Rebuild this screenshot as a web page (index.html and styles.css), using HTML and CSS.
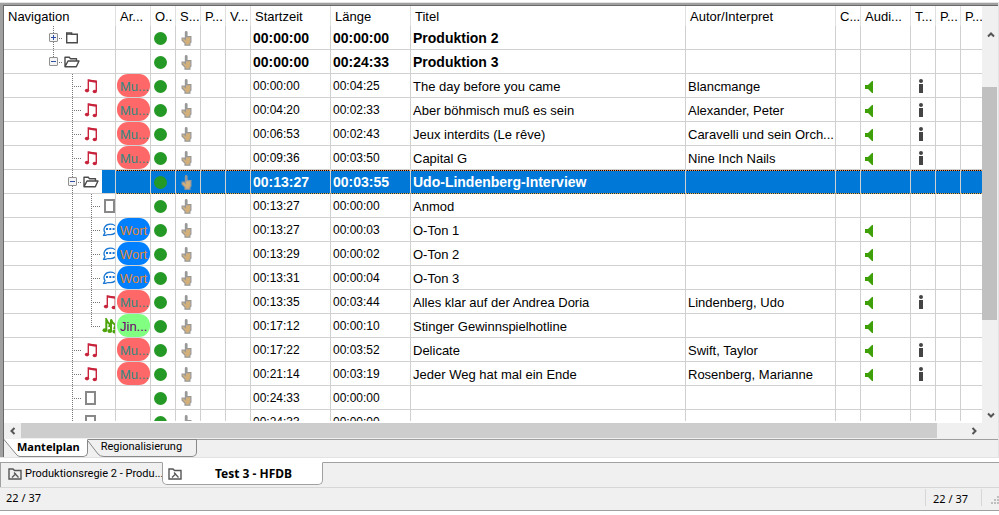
FILE: index.html
```
<!DOCTYPE html>
<html lang="de">
<head>
    <meta charset="UTF-8">
    <meta name="viewport" content="width=device-width, initial-scale=1.0">
    <title>Test 3 - HFDB</title>
    <link rel="stylesheet" href="styles.css">
</head>
<body>

<svg class="sprite" aria-hidden="true">
    <symbol id="folder" viewBox="0 0 16 16">
        <path d="M2.7 4.2V12.8H13.3V4.2H7.6V2.9H2.7V4.2" fill="none" stroke="#4a4a4a" stroke-width="1.4"/>
        <path d="M2.5 4H7.5" stroke="#4a4a4a" stroke-width="1.6"/>
    </symbol>
    <symbol id="folder-open" viewBox="0 0 16 16">
        <path d="M1 12.5V3.2H5.3L6.3 4.7H12.5V6.8M1 12.7L4 7H15L12.3 12.7Z" fill="none" stroke="#4a4a4a" stroke-width="1.4" stroke-linejoin="round"/>
    </symbol>
    <symbol id="music" viewBox="0 0 16 16">
        <path d="M5.3 12V2L13.3 3.3V13" fill="none" stroke="#c8243c" stroke-width="1.4"/>
        <path d="M5 1.4L14 2.8V5L5 3.6Z" fill="#c8243c"/>
        <ellipse cx="4" cy="12.6" rx="2.2" ry="1.8" fill="#c8243c"/>
        <ellipse cx="11.8" cy="13.5" rx="2.2" ry="1.8" fill="#c8243c"/>
    </symbol>
    <symbol id="jingle" viewBox="0 0 16 16">
        <path d="M4.3 12V1.5L6 4.5L8 6.5L7 9M9 13V1.5L10.5 4.5L13.5 7L12 11" fill="none" stroke="#4ca30c" stroke-width="2"/>
        <ellipse cx="2.9" cy="12.3" rx="2.4" ry="2" fill="#4ca30c"/>
        <ellipse cx="7.8" cy="13" rx="2.4" ry="2" fill="#4ca30c"/>
        <ellipse cx="12.4" cy="13.5" rx="2" ry="2" fill="#4ca30c"/>
    </symbol>
    <symbol id="speech" viewBox="0 0 16 16">
        <path d="M1.6 13.4L3 10.6C0.6 7 3 2.2 8.2 2.2C12 2.2 14.8 4.4 14.8 7.4C14.8 10.4 12 12.6 8.4 12.6C6.8 12.6 5.6 12.3 4.8 12.8C3.8 13.3 2.6 13.6 1.6 13.4Z" fill="#fff" stroke="#1976d2" stroke-width="1.3"/>
        <path d="M4 7H6M7.3 7H9.3M10.6 7H12.6" stroke="#1976d2" stroke-width="2"/>
    </symbol>
    <symbol id="blank" viewBox="0 0 16 16">
        <rect x="3" y="2" width="9" height="12" fill="#fff" stroke="#888" stroke-width="2"/>
    </symbol>
    <symbol id="hand" viewBox="0 0 12 16">
        <path d="M4.4 1.4C4.4 0.4 6 0.4 6 1.4V5.6H9.9V11.2L8.9 12.2V14.2H4V12.2L1.1 9.2V7.2H3.2L4.4 8.2Z" fill="#d2b07c" stroke="#999" stroke-width="1.2"/>
        <path d="M5.2 1V6.5" stroke="#999" stroke-width="1.6"/>
    </symbol>
    <symbol id="speaker" viewBox="0 0 9 12">
        <path d="M0 4H3L7 0H8V12H7L3 8H0Z" fill="#3f9f06"/>
    </symbol>
    <symbol id="info" viewBox="0 0 6 16">
        <circle cx="3" cy="2" r="2" fill="#444"/>
        <rect x="1" y="5" width="4" height="9" fill="#444"/>
    </symbol>
    <symbol id="project" viewBox="0 0 14 12">
        <path d="M1 11V1H5L6.5 2.5H13V11Z" fill="none" stroke="#555" stroke-width="1.4"/>
        <path d="M4 9.5L8 5.5M6 4.5L10.5 9.5" stroke="#555" stroke-width="1.2"/>
    </symbol>
</svg>

<main class="plan">
    <div class="grid">
        <div class="grid-view">
            <table class="playlist">
                <colgroup>
                    <col class="w-nav"><col class="w-type"><col class="w-icon"><col class="w-icon"><col class="w-icon"><col class="w-icon">
                    <col class="w-time"><col class="w-time"><col><col class="w-author"><col class="w-icon"><col class="w-audio"><col class="w-icon"><col class="w-icon"><col class="w-last">
                </colgroup>
                <thead>
                    <tr><th>Navigation</th><th>Ar...</th><th>O..</th><th>S...</th><th>P...</th><th>V...</th><th>Startzeit</th><th>Länge</th><th>Titel</th><th>Autor/Interpret</th><th>C...</th><th>Audi...</th><th>T...</th><th>P...</th><th>P...</th></tr>
                </thead>
                <tbody>
                    <tr class="group">
                        <td><div class="tree"><i class="guide line"><b class="box plus"></b></i><svg><use href="#folder"/></svg></div></td>
                        <td></td><td><i class="dot"></i></td><td><svg class="hand"><use href="#hand"/></svg></td><td></td><td></td>
                        <td>00:00:00</td><td>00:00:00</td><td>Produktion 2</td><td></td><td></td><td></td><td></td><td></td><td></td>
                    </tr>
                    <tr class="group">
                        <td><div class="tree"><i class="guide line end"><b class="box"></b></i><svg><use href="#folder-open"/></svg></div></td>
                        <td></td><td><i class="dot"></i></td><td><svg class="hand"><use href="#hand"/></svg></td><td></td><td></td>
                        <td>00:00:00</td><td>00:24:33</td><td>Produktion 3</td><td></td><td></td><td></td><td></td><td></td><td></td>
                    </tr>
                    <tr>
                        <td><div class="tree"><i class="guide"></i><i class="guide line"></i><svg><use href="#music"/></svg></div></td>
                        <td><span class="pill music">Mu...</span></td><td><i class="dot"></i></td><td><svg class="hand"><use href="#hand"/></svg></td><td></td><td></td>
                        <td>00:00:00</td><td>00:04:25</td><td>The day before you came</td><td>Blancmange</td><td></td><td><svg class="speaker"><use href="#speaker"/></svg></td><td><svg class="info"><use href="#info"/></svg></td><td></td><td></td>
                    </tr>
                    <tr>
                        <td><div class="tree"><i class="guide"></i><i class="guide line"></i><svg><use href="#music"/></svg></div></td>
                        <td><span class="pill music">Mu...</span></td><td><i class="dot"></i></td><td><svg class="hand"><use href="#hand"/></svg></td><td></td><td></td>
                        <td>00:04:20</td><td>00:02:33</td><td>Aber böhmisch muß es sein</td><td>Alexander, Peter</td><td></td><td><svg class="speaker"><use href="#speaker"/></svg></td><td><svg class="info"><use href="#info"/></svg></td><td></td><td></td>
                    </tr>
                    <tr>
                        <td><div class="tree"><i class="guide"></i><i class="guide line"></i><svg><use href="#music"/></svg></div></td>
                        <td><span class="pill music">Mu...</span></td><td><i class="dot"></i></td><td><svg class="hand"><use href="#hand"/></svg></td><td></td><td></td>
                        <td>00:06:53</td><td>00:02:43</td><td>Jeux interdits (Le rêve)</td><td>Caravelli und sein Orch...</td><td></td><td><svg class="speaker"><use href="#speaker"/></svg></td><td><svg class="info"><use href="#info"/></svg></td><td></td><td></td>
                    </tr>
                    <tr>
                        <td><div class="tree"><i class="guide"></i><i class="guide line"></i><svg><use href="#music"/></svg></div></td>
                        <td><span class="pill music">Mu...</span></td><td><i class="dot"></i></td><td><svg class="hand"><use href="#hand"/></svg></td><td></td><td></td>
                        <td>00:09:36</td><td>00:03:50</td><td>Capital G</td><td>Nine Inch Nails</td><td></td><td><svg class="speaker"><use href="#speaker"/></svg></td><td><svg class="info"><use href="#info"/></svg></td><td></td><td></td>
                    </tr>
                    <tr class="group selected">
                        <td><div class="tree"><i class="guide"></i><i class="guide line"><b class="box"></b></i><svg><use href="#folder-open"/></svg></div></td>
                        <td></td><td><i class="dot"></i></td><td><svg class="hand"><use href="#hand"/></svg></td><td></td><td></td>
                        <td>00:13:27</td><td>00:03:55</td><td>Udo-Lindenberg-Interview</td><td></td><td></td><td></td><td></td><td></td><td></td>
                    </tr>
                    <tr>
                        <td><div class="tree"><i class="guide"></i><i class="guide pass"></i><i class="guide line"></i><svg><use href="#blank"/></svg></div></td>
                        <td></td><td><i class="dot"></i></td><td><svg class="hand"><use href="#hand"/></svg></td><td></td><td></td>
                        <td>00:13:27</td><td>00:00:00</td><td>Anmod</td><td></td><td></td><td></td><td></td><td></td><td></td>
                    </tr>
                    <tr>
                        <td><div class="tree"><i class="guide"></i><i class="guide pass"></i><i class="guide line"></i><svg><use href="#speech"/></svg></div></td>
                        <td><span class="pill word">Wort</span></td><td><i class="dot"></i></td><td><svg class="hand"><use href="#hand"/></svg></td><td></td><td></td>
                        <td>00:13:27</td><td>00:00:03</td><td>O-Ton 1</td><td></td><td></td><td><svg class="speaker"><use href="#speaker"/></svg></td><td></td><td></td><td></td>
                    </tr>
                    <tr>
                        <td><div class="tree"><i class="guide"></i><i class="guide pass"></i><i class="guide line"></i><svg><use href="#speech"/></svg></div></td>
                        <td><span class="pill word">Wort</span></td><td><i class="dot"></i></td><td><svg class="hand"><use href="#hand"/></svg></td><td></td><td></td>
                        <td>00:13:29</td><td>00:00:02</td><td>O-Ton 2</td><td></td><td></td><td><svg class="speaker"><use href="#speaker"/></svg></td><td></td><td></td><td></td>
                    </tr>
                    <tr>
                        <td><div class="tree"><i class="guide"></i><i class="guide pass"></i><i class="guide line"></i><svg><use href="#speech"/></svg></div></td>
                        <td><span class="pill word">Wort</span></td><td><i class="dot"></i></td><td><svg class="hand"><use href="#hand"/></svg></td><td></td><td></td>
                        <td>00:13:31</td><td>00:00:04</td><td>O-Ton 3</td><td></td><td></td><td><svg class="speaker"><use href="#speaker"/></svg></td><td></td><td></td><td></td>
                    </tr>
                    <tr>
                        <td><div class="tree"><i class="guide"></i><i class="guide pass"></i><i class="guide line"></i><svg><use href="#music"/></svg></div></td>
                        <td><span class="pill music">Mu...</span></td><td><i class="dot"></i></td><td><svg class="hand"><use href="#hand"/></svg></td><td></td><td></td>
                        <td>00:13:35</td><td>00:03:44</td><td>Alles klar auf der Andrea Doria</td><td>Lindenberg, Udo</td><td></td><td><svg class="speaker"><use href="#speaker"/></svg></td><td><svg class="info"><use href="#info"/></svg></td><td></td><td></td>
                    </tr>
                    <tr>
                        <td><div class="tree"><i class="guide"></i><i class="guide pass"></i><i class="guide line end"></i><svg><use href="#jingle"/></svg></div></td>
                        <td><span class="pill jingle">Jin...</span></td><td><i class="dot"></i></td><td><svg class="hand"><use href="#hand"/></svg></td><td></td><td></td>
                        <td>00:17:12</td><td>00:00:10</td><td>Stinger Gewinnspielhotline</td><td></td><td></td><td><svg class="speaker"><use href="#speaker"/></svg></td><td></td><td></td><td></td>
                    </tr>
                    <tr>
                        <td><div class="tree"><i class="guide"></i><i class="guide line"></i><svg><use href="#music"/></svg></div></td>
                        <td><span class="pill music">Mu...</span></td><td><i class="dot"></i></td><td><svg class="hand"><use href="#hand"/></svg></td><td></td><td></td>
                        <td>00:17:22</td><td>00:03:52</td><td>Delicate</td><td>Swift, Taylor</td><td></td><td><svg class="speaker"><use href="#speaker"/></svg></td><td><svg class="info"><use href="#info"/></svg></td><td></td><td></td>
                    </tr>
                    <tr>
                        <td><div class="tree"><i class="guide"></i><i class="guide line"></i><svg><use href="#music"/></svg></div></td>
                        <td><span class="pill music">Mu...</span></td><td><i class="dot"></i></td><td><svg class="hand"><use href="#hand"/></svg></td><td></td><td></td>
                        <td>00:21:14</td><td>00:03:19</td><td>Jeder Weg hat mal ein Ende</td><td>Rosenberg, Marianne</td><td></td><td><svg class="speaker"><use href="#speaker"/></svg></td><td><svg class="info"><use href="#info"/></svg></td><td></td><td></td>
                    </tr>
                    <tr>
                        <td><div class="tree"><i class="guide"></i><i class="guide line"></i><svg><use href="#blank"/></svg></div></td>
                        <td></td><td><i class="dot"></i></td><td><svg class="hand"><use href="#hand"/></svg></td><td></td><td></td>
                        <td>00:24:33</td><td>00:00:00</td><td></td><td></td><td></td><td></td><td></td><td></td><td></td>
                    </tr>
                    <tr>
                        <td><div class="tree"><i class="guide"></i><i class="guide line"></i><svg><use href="#blank"/></svg></div></td>
                        <td></td><td><i class="dot"></i></td><td><svg class="hand"><use href="#hand"/></svg></td><td></td><td></td>
                        <td>00:24:33</td><td>00:00:00</td><td></td><td></td><td></td><td></td><td></td><td></td><td></td>
                    </tr>
                </tbody>
            </table>
        </div>
        <div class="vscroll">
            <button type="button" aria-label="Nach oben"><svg viewBox="0 0 8 6"><path d="M1 4.5L4 1.5L7 4.5"/></svg></button>
            <div class="track"><div class="thumb"></div></div>
            <button type="button" aria-label="Nach unten"><svg viewBox="0 0 8 6"><path d="M1 1.5L4 4.5L7 1.5"/></svg></button>
        </div>
    </div>
    <div class="hscroll">
        <button type="button" aria-label="Nach links"><svg viewBox="0 0 6 8"><path d="M4.5 1L1.5 4L4.5 7"/></svg></button>
        <div class="track"><div class="thumb"></div></div>
        <button type="button" aria-label="Nach rechts"><svg viewBox="0 0 6 8"><path d="M1.5 1L4.5 4L1.5 7"/></svg></button>
    </div>
    <nav class="sheets">
        <button type="button" class="sheet active"><svg viewBox="0 0 16 18"><path class="fill" d="M0 0L12 15Q14 17.5 16 17.5V0Z"/><path d="M0 0.5L12 15Q14 17.5 16 17.5"/></svg><span>Mantelplan</span></button>
        <button type="button" class="sheet"><svg viewBox="0 0 16 18"><path d="M0 0.5H16M0 2L10 15Q12 17.5 16 17.5"/></svg><span>Regionalisierung</span></button>
    </nav>
</main>

<nav class="windows">
    <button type="button" class="window"><svg><use href="#project"/></svg><span>Produktionsregie 2 - Produ...</span></button>
    <button type="button" class="window active"><svg><use href="#project"/></svg><span>Test 3 - HFDB</span></button>
    <div class="rest"></div>
</nav>

<footer class="status">
    <span class="position">22 / 37</span>
    <span class="count">22 / 37</span>
    <svg class="grip" viewBox="0 0 8 8"><path d="M6 0H8V2H6ZM3 3H5V5H3ZM6 3H8V5H6ZM0 6H2V8H0ZM3 6H5V8H3ZM6 6H8V8H6Z"/></svg>
</footer>

</body>
</html>
```
FILE: styles.css
```
* {
    box-sizing: border-box;
}
body {
    margin: 0;
    padding: 2px 0 4px;
    height: 100vh;
    display: flex;
    flex-direction: column;
    overflow: hidden;
    background: #fff;
    color: #000;
    font-family: "Liberation Sans", Arial, sans-serif;
    font-size: 13px;
}
button {
    margin: 0;
    padding: 0;
    border: 0;
    background: none;
    color: inherit;
    font: inherit;
}
.sprite {
    display: none;
}

/* Playlist grid */
.plan {
    flex: 1;
    min-height: 0;
    display: flex;
    flex-direction: column;
    border-top: 1px solid #e3e3e3;
    border-right: 1px solid #e3e3e3;
    border-bottom: 1px solid #e3e3e3;
    background: #f0f0f0;
    box-shadow: inset 3px 2px #a0a0a0, inset 4px 3px #696969;
    padding: 3px 0 0 4px;
}
.grid {
    flex: 1;
    min-height: 0;
    display: flex;
    background: #fff;
}
.grid-view {
    flex: 1;
    min-width: 0;
    overflow: hidden;
    margin-bottom: 2px;
}
.playlist {
    width: 100%;
    table-layout: fixed;
    border-collapse: separate;
    border-spacing: 0;
}
.w-nav { width: 112px; }
.w-type { width: 35px; }
.w-icon { width: 25px; }
.w-time { width: 80px; }
.w-author { width: 150px; }
.w-audio { width: 50px; }
.w-last { width: 21px; }
th {
    height: 20px;
    padding: 2px 0 0 4px;
    border-right: 1px solid #e0e0e0;
    font-weight: normal;
    line-height: 18px;
    text-align: left;
    white-space: nowrap;
}
td {
    height: 24px;
    padding: 2px 0 0 2px;
    border-right: 1px solid #d0d0d0;
    border-bottom: 1px solid #d0d0d0;
    line-height: 21px;
    white-space: nowrap;
    overflow: hidden;
}
th:last-child,
td:last-child {
    border-right: 0;
}
td:first-child {
    padding: 0;
}
td:nth-child(7),
td:nth-child(8) {
    font-size: 12px;
}
.group td {
    font-size: 14px;
    font-weight: bold;
}
.selected td {
    color: #fff;
    border-bottom-color: transparent;
    background:
        repeating-linear-gradient(90deg, #ff9040 0 1px, #000 1px 2px) top / 100% 1px no-repeat border-box,
        repeating-linear-gradient(90deg, #e0b040 0 1px, #003060 1px 2px) bottom / 100% 1px no-repeat border-box,
        #0078d7;
}
/* the highlight starts behind the folder icon */
.selected td:first-child {
    border-bottom-color: #d0d0d0;
    background: #0078d7;
    background-clip: padding-box;
}
.selected .tree {
    width: 98px;
    background: #fff;
}

/* Navigation tree */
.tree {
    display: flex;
    align-items: center;
    height: 23px;
    padding-left: 40px;
}
.tree svg {
    flex: none;
    width: 16px;
    height: 16px;
    margin-left: 1px;
}
.guide {
    flex: none;
    width: 19px;
    height: 23px;
    display: grid;
    place-items: center;
}
.line,
.pass {
    background: repeating-linear-gradient(#777 0 1px, #fff 1px 2px) 9px 0 / 1px 100% no-repeat;
}
.line {
    background:
        repeating-linear-gradient(90deg, #777 0 1px, #fff 1px 2px) 9px 12px / 10px 1px no-repeat,
        repeating-linear-gradient(#777 0 1px, #fff 1px 2px) 9px 0 / 1px 100% no-repeat;
}
.line.end {
    background-size: 10px 1px, 1px 12px;
}
.box {
    width: 9px;
    height: 9px;
    border: 1px solid #919191;
    border-radius: 1px;
    background: linear-gradient(#3050a8, #3050a8) center / 5px 1px no-repeat, #f4f4f4;
}
.plus {
    background:
        linear-gradient(#3050a8, #3050a8) center / 5px 1px no-repeat,
        linear-gradient(#3050a8, #3050a8) center / 1px 5px no-repeat,
        #f4f4f4;
}

/* Cell contents */
.pill {
    display: block;
    width: 33px;
    height: 23px;
    margin: -2px 0 0 -1px;
    padding-left: 3px;
    border-radius: 11px;
    line-height: 25px;
}
.pill.music {
    background: #ff6868;
    color: #308880;
}
.pill.word {
    background: #0080ff;
    color: #e08838;
}
.pill.jingle {
    background: #80ff80;
    color: #700070;
}
.dot {
    display: block;
    width: 13px;
    height: 13px;
    margin-left: 1px;
    border-radius: 50%;
    background: #259925;
}
td svg {
    display: block;
}
.hand {
    width: 12px;
    height: 16px;
    margin-left: 3px;
}
.speaker {
    width: 9px;
    height: 12px;
    margin-left: 2px;
}
.info {
    width: 6px;
    height: 16px;
    margin-left: 5px;
}

/* Scroll bars */
.vscroll {
    width: 16px;
    display: flex;
    flex-direction: column;
    padding-top: 20px;
    background: #f0f0f0;
}
.hscroll {
    height: 15px;
    display: flex;
    margin: 0 16px 1px 0;
    background: #f0f0f0;
}
.vscroll button,
.hscroll button {
    flex: none;
    display: grid;
    place-items: center;
    width: 17px;
    height: 17px;
}
.hscroll button {
    height: 15px;
}
.vscroll svg {
    width: 8px;
    height: 6px;
}
.hscroll svg {
    width: 6px;
    height: 8px;
}
.vscroll path,
.hscroll path {
    fill: none;
    stroke: #555;
    stroke-width: 2;
}
.track {
    flex: 1;
}
.vscroll .track {
    padding-top: 44px;
}
.vscroll .thumb {
    width: 15px;
    height: 73%;
    background: #c0c0c0;
}
.hscroll .thumb {
    width: 97%;
    height: 15px;
    background: #cdcdcd;
}

/* Sheet tabs */
.sheets {
    display: flex;
    border-top: 1px solid #a0a0a0;
    font: 11px/17px Roboto, sans-serif;
}
.sheet {
    display: flex;
    height: 18px;
    margin-top: -1px;
}
.sheet svg {
    width: 16px;
    height: 18px;
}
.sheet path {
    fill: none;
    stroke: #888;
}
.sheet .fill {
    fill: #fff;
    stroke: none;
}
.sheet span {
    height: 18px;
    padding: 0 14px 0 0;
    border: 1px solid #888;
    border-width: 1px 1px 1px 0;
    border-radius: 0 0 5px 0;
    line-height: 14px;
    text-indent: -3px;
}
.sheet.active span {
    padding-right: 7px;
    border-top-color: #fff;
    background: #fff;
    font-family: "Noto Sans", sans-serif;
    font-weight: bold;
}

/* Window tabs */
.windows {
    display: flex;
    height: 25px;
    margin-top: 4px;
    border-left: 1px solid #a0a0a0;
    background: #f0f0f0;
    font: 11px/20px Roboto, sans-serif;
}
.window {
    display: flex;
    align-items: center;
    width: 161px;
    height: 23px;
    padding-left: 7px;
    gap: 3px;
    border-top: 1px solid #a0a0a0;
    white-space: nowrap;
}
.window svg {
    flex: none;
    width: 14px;
    height: 12px;
}
.window.active {
    padding-left: 5px;
    border: 1px solid #a0a0a0;
    border-top-color: #fff;
    border-radius: 0 0 5px 5px;
    background: #fff;
    font: bold 12px/20px "Noto Sans", sans-serif;
}
.window.active span {
    flex: 1;
    text-align: center;
}
.rest {
    flex: 1;
    border-top: 1px solid #a0a0a0;
}

/* Status bar */
.status {
    display: flex;
    height: 24px;
    border-top: 1px solid #d7d7d7;
    border-bottom: 1px solid #a0a0a0;
    background: #f0f0f0;
    font: 11px/19px "Noto Sans", sans-serif;
}
.position {
    flex: 1;
    padding-left: 6px;
}
.count {
    width: 57px;
    height: 17px;
    margin-top: 1px;
    padding-left: 7px;
    border: 1px solid #d7d7d7;
    border-width: 0 1px;
}
.grip {
    width: 8px;
    height: 8px;
    margin: 8px 0 0 9px;
    fill: #bfbfbf;
}
```
